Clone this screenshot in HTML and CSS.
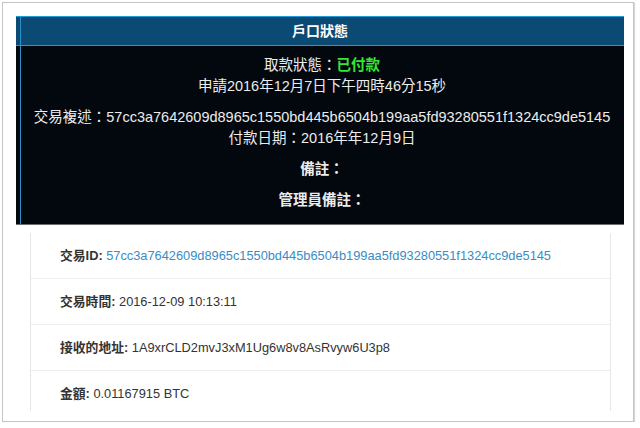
FILE: index.html
```html
<!DOCTYPE html>
<html lang="zh-Hant">
<head>
    <meta charset="UTF-8">
    <meta name="viewport" content="width=device-width, initial-scale=1.0">
    <title>戶口狀態</title>
    <link rel="stylesheet" href="styles.css">
</head>
<body>
    <div class="frame">
        <div class="panel">
            <div class="panel-head">戶口狀態</div>
            <div class="panel-body">
                <p>取款狀態：<span class="paid">已付款</span><br>申請2016年12月7日下午四時46分15秒</p>
                <p>交易複述：57cc3a7642609d8965c1550bd445b6504b199aa5fd93280551f1324cc9de5145<br>付款日期：2016年年12月9日</p>
                <p class="strong">備註：</p>
                <p class="strong">管理員備註：</p>
            </div>
        </div>

        <div class="scroll">
            <ul class="tx-list">
                <li><b>交易ID:</b> <a href="#">57cc3a7642609d8965c1550bd445b6504b199aa5fd93280551f1324cc9de5145</a></li>
                <li><b>交易時間:</b> 2016-12-09 10:13:11</li>
                <li><b>接收的地址:</b> 1A9xrCLD2mvJ3xM1Ug6w8v8AsRvyw6U3p8</li>
                <li><b>金額:</b> 0.01167915 BTC</li>
            </ul>
        </div>
    </div>
</body>
</html>
```

FILE: styles.css
```css
body { margin: 0; background-color: #fff; font-family: "Liberation Sans", "Noto Sans CJK TC", sans-serif; }
.frame { width: 630px; height: 418px; margin: 2px 0 0 2px; border: 1px solid #c4c4c4; box-shadow: 1px 1px 1px rgba(0,0,0,0.15); background-color: #fff; overflow: hidden; }

.panel { width: 608px; margin: 13px 0 0 13px; background-color: #03080e; border-bottom: 1px solid #6c6f72; background-image: linear-gradient(to right, transparent 4px, #2a8fc8 4px, #2a8fc8 5px, transparent 5px); }
.panel-head { height: 28px; line-height: 28px; background-color: #0b4a72; border-top: 1px solid #1e9ad8; border-bottom: 1px solid #1e9ad8; background-image: linear-gradient(to right, transparent 4px, #2a8fc8 4px, #2a8fc8 5px, transparent 5px); color: #fff; font-weight: bold; font-size: 14px; text-align: center; }
.panel-body { padding: 9px 0 13px 4px; color: #ececec; font-size: 14.5px; line-height: 21px; text-align: center; }
.panel-body p { margin: 10px 0 0; }
.panel-body p:first-child { margin-top: 0; }
.panel-body .strong { font-weight: bold; }
.paid { color: #35e635; font-weight: bold; }

.scroll { height: 178px; margin: 8px 0 0 27px; width: 581px; overflow: hidden; }
.tx-list { list-style: none; margin: 0; padding: 0; border-left: 1px solid #e6e6e6; border-right: 1px solid #e6e6e6; }
.tx-list li { height: 45px; line-height: 45px; padding-left: 29px; border-bottom: 1px solid #eee; color: #333; font-size: 12.8px; }
.tx-list b { color: #333; }
.tx-list a { color: #3a8cc4; text-decoration: none; }
```
